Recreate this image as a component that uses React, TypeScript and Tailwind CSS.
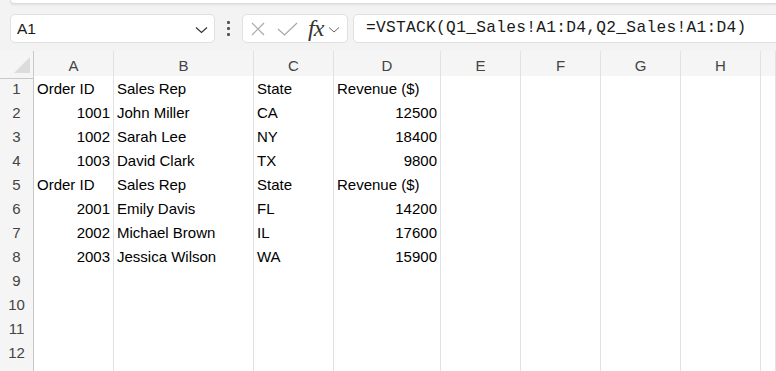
import React from "react";

const cols = [
  { l: "A", w: 80 },
  { l: "B", w: 140 },
  { l: "C", w: 80 },
  { l: "D", w: 107 },
  { l: "E", w: 80 },
  { l: "F", w: 80 },
  { l: "G", w: 80 },
  { l: "H", w: 80 },
  { l: "", w: 0 },
];

type Cell = { t: string; r?: boolean };
const data: Cell[][] = [
  [{ t: "Order ID" }, { t: "Sales Rep" }, { t: "State" }, { t: "Revenue ($)" }],
  [{ t: "1001", r: true }, { t: "John Miller" }, { t: "CA" }, { t: "12500", r: true }],
  [{ t: "1002", r: true }, { t: "Sarah Lee" }, { t: "NY" }, { t: "18400", r: true }],
  [{ t: "1003", r: true }, { t: "David Clark" }, { t: "TX" }, { t: "9800", r: true }],
  [{ t: "Order ID" }, { t: "Sales Rep" }, { t: "State" }, { t: "Revenue ($)" }],
  [{ t: "2001", r: true }, { t: "Emily Davis" }, { t: "FL" }, { t: "14200", r: true }],
  [{ t: "2002", r: true }, { t: "Michael Brown" }, { t: "IL" }, { t: "17600", r: true }],
  [{ t: "2003", r: true }, { t: "Jessica Wilson" }, { t: "WA" }, { t: "15900", r: true }],
];

const gridCols = "grid grid-cols-[34px_80px_140px_80px_107px_80px_80px_80px_80px_1fr]";

export default function App() {
  const rows = Array.from({ length: 13 }, (_, i) => i + 1);
  return (
    <div
      className="w-[776px] h-[371px] overflow-hidden bg-[#f3f3f3] flex flex-col"
      style={{ fontFamily: '"Liberation Sans", Arial, sans-serif' }}
    >
      {/* top ribbon edge */}
      <div className="h-[4px] ml-[10px] bg-white rounded-bl-[6px] border-b border-l border-[#dcdcdc] shadow-[0_1px_2px_rgba(0,0,0,0.08)] shrink-0" />

      {/* formula bar */}
      <div className="mt-[10px] h-[29px] flex items-stretch pl-[10px] shrink-0">
        <div className="w-[205px] bg-white border border-[#e0e0e0] rounded-[5px] flex items-center pl-[6px] pr-[6px]">
          <span className="text-[15.5px] text-[#1a1a1a] flex-1">A1</span>
          <svg width="13" height="8" viewBox="0 0 13 8" className="mt-[2px]">
            <path d="M1 1.5 L6.5 6.5 L12 1.5" fill="none" stroke="#333" strokeWidth="1.2" />
          </svg>
        </div>
        <div className="w-[27px] flex items-center justify-center">
          <div className="flex flex-col gap-[3px]">
            <div className="w-[3px] h-[3px] rounded-[1px] bg-[#555]" />
            <div className="w-[3px] h-[3px] rounded-[1px] bg-[#555]" />
            <div className="w-[3px] h-[3px] rounded-[1px] bg-[#555]" />
          </div>
        </div>
        <div className="w-[106px] bg-white border border-[#e0e0e0] rounded-[5px] flex items-center pl-[8px]">
          <svg width="14" height="14" viewBox="0 0 14 14">
            <path d="M1 1 L13 13 M13 1 L1 13" stroke="#a8a8a8" strokeWidth="1.2" fill="none" />
          </svg>
          <svg width="21" height="14" viewBox="0 0 21 14" className="ml-[12px]">
            <path d="M1 7 L7.5 13 L20 1" stroke="#a8a8a8" strokeWidth="1.2" fill="none" />
          </svg>
          <span
            className="ml-[10px] italic text-[24px] leading-none text-[#333] tracking-[-1px] -mt-[2px]"
            style={{ fontFamily: '"Liberation Serif", "Times New Roman", serif' }}
          >
            fx
          </span>
          <svg width="12" height="8" viewBox="0 0 12 8" className="ml-[5px] mt-[2px]">
            <path d="M1 1.5 L6 6 L11 1.5" fill="none" stroke="#666" strokeWidth="1" />
          </svg>
        </div>
        <div className="flex-1 ml-[5px] -mr-[10px] bg-white border border-[#e0e0e0] rounded-[5px] flex items-center pl-[12px]">
          <span
            className="text-[16.2px] tracking-[0.3px] text-[#1a1a1a] whitespace-nowrap"
            style={{ fontFamily: '"Liberation Mono", "Courier New", monospace' }}
          >
            =VSTACK(Q1_Sales!A1:D4,Q2_Sales!A1:D4)
          </span>
        </div>
      </div>

      {/* sheet */}
      <div className="mt-[8px] flex flex-col">
        <div className={`${gridCols} h-[25px] bg-[#f5f5f5]`}>
          <div className="border-r border-b border-[#c8c8c8] relative">
            <svg width="16" height="16" viewBox="0 0 16 16" className="absolute left-[14px] top-[6px]">
              <path d="M16 0 L16 16 L0 16 Z" fill="#dcdcdc" />
            </svg>
          </div>
          {cols.map((c, i) => (
            <div
              key={i}
              className="border-b border-b-[#c8c8c8] border-r border-r-[#e1e1e1] flex items-center justify-center text-[15px] text-[#444] pt-[4px]"
            >
              {c.l}
            </div>
          ))}
        </div>
        {rows.map((r) => (
          <div key={r} className={`${gridCols} h-[24px]`}>
            <div className="bg-[#f5f5f5] border-r border-r-[#c8c8c8] border-b border-b-[#e1e1e1] flex items-center justify-center text-[15px] text-[#444] pt-[2px]">
              {r <= 12 ? r : ""}
            </div>
            {cols.map((_, ci) => {
              const cell = data[r - 1]?.[ci];
              return (
                <div
                  key={ci}
                  className={`bg-white border-r border-b border-[#e1e1e1] flex items-center text-[15px] text-black whitespace-nowrap overflow-hidden pt-[2px] ${
                    cell?.r ? "justify-end pr-[3px]" : "pl-[3px]"
                  }`}
                >
                  {cell?.t ?? ""}
                </div>
              );
            })}
          </div>
        ))}
      </div>
    </div>
  );
}
